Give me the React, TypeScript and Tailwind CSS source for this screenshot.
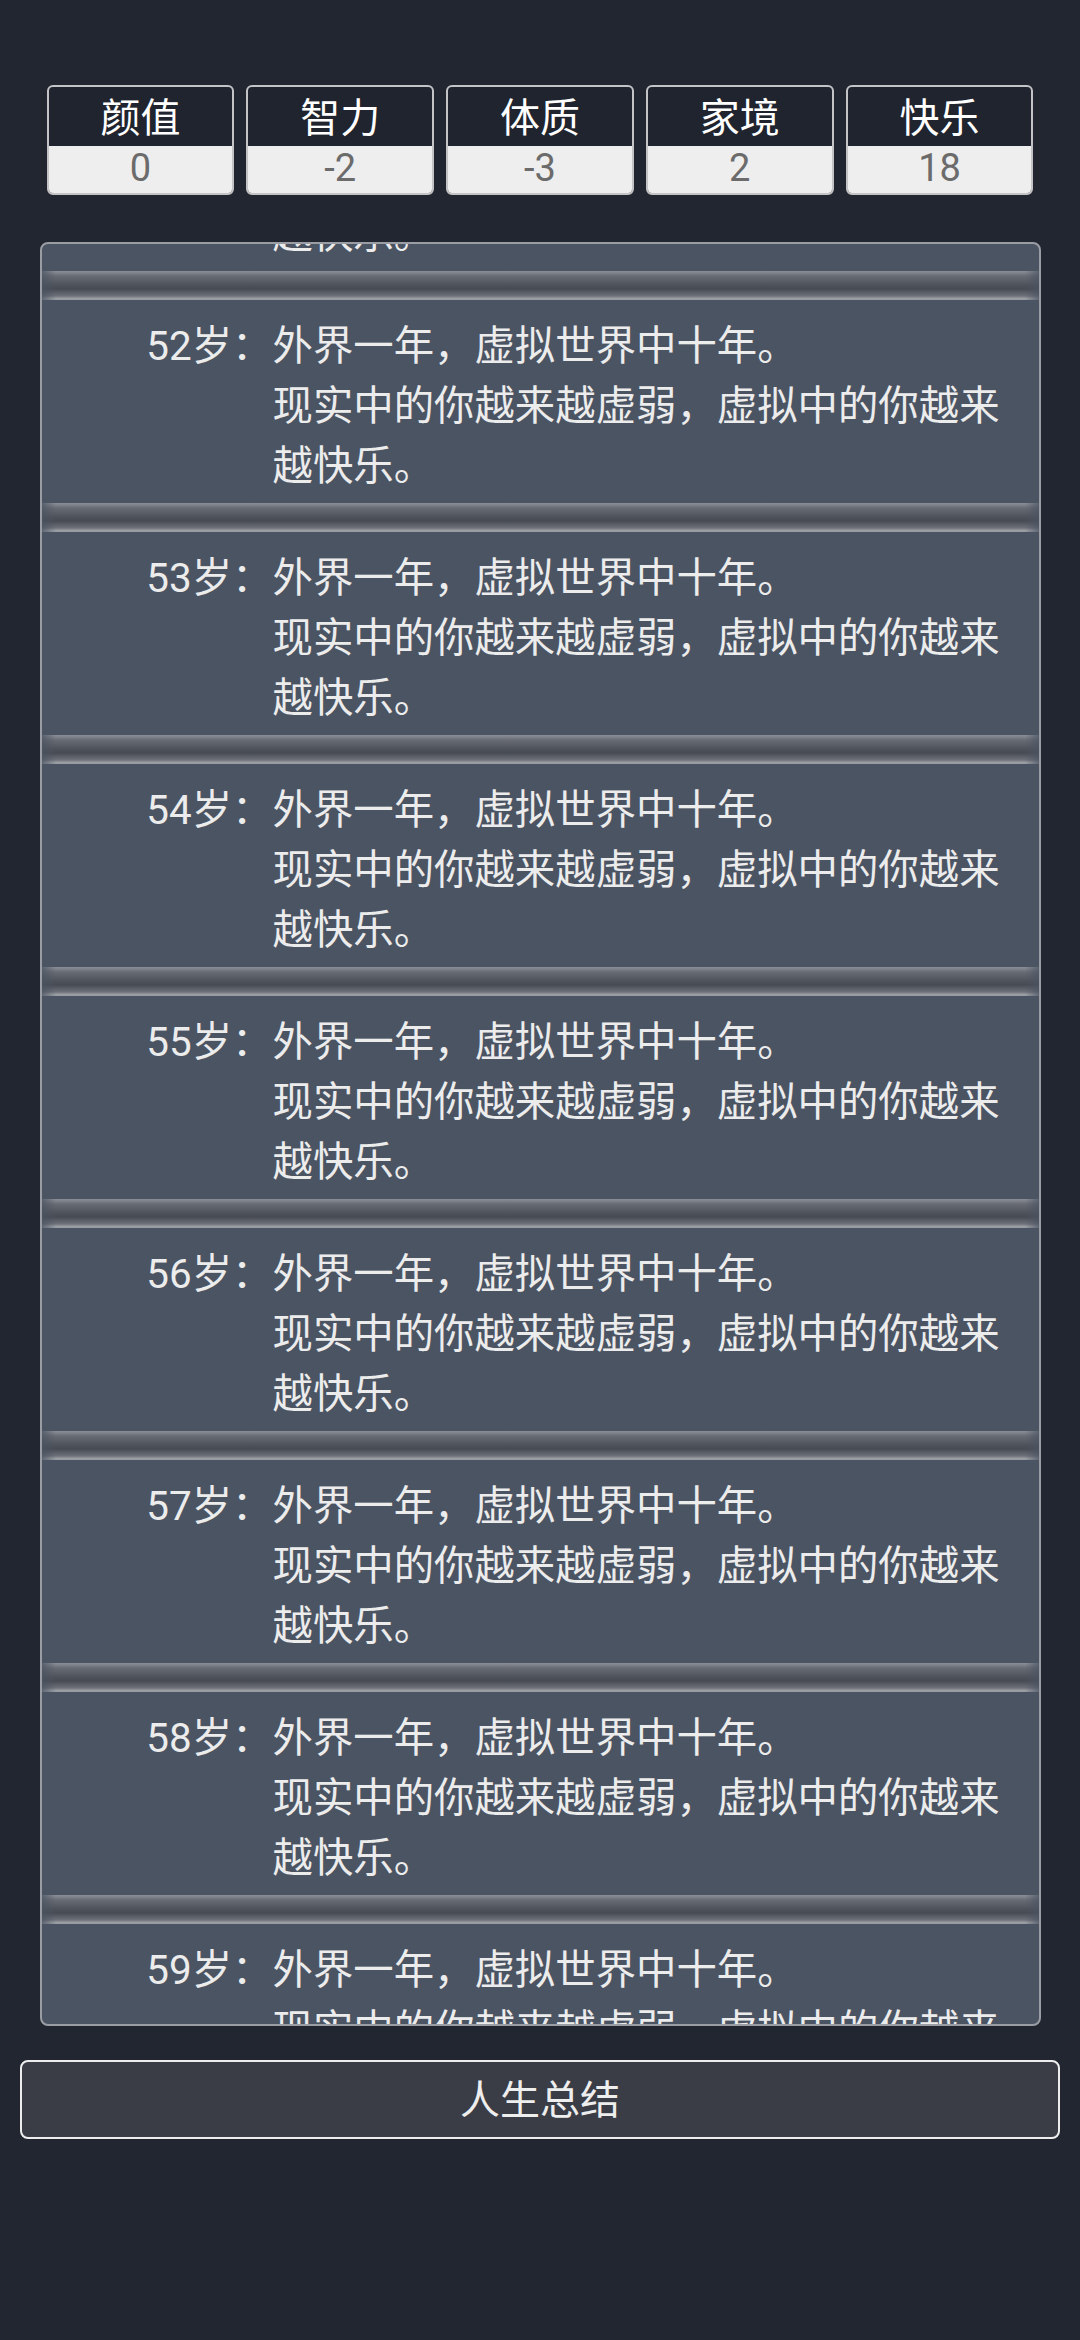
import React from "react";

type Stat = {
  label: string;
  value: number;
};

const stats: Stat[] = [
  { label: "颜值", value: 0 },
  { label: "智力", value: -2 },
  { label: "体质", value: -3 },
  { label: "家境", value: 2 },
  { label: "快乐", value: 18 },
];

const lines = ["外界一年，虚拟世界中十年。", "现实中的你越来越虚弱，虚拟中的你越来越快乐。"];

const ages = [52, 53, 54, 55, 56, 57, 58, 59];

function Ridge(): React.ReactElement {
  return (
    <div className="h-[29px] w-full bg-[linear-gradient(to_right,rgba(75,84,99,0.75),rgba(75,84,99,0)_14px,rgba(75,84,99,0)_calc(100%-14px),rgba(75,84,99,0.75)),linear-gradient(to_bottom,#8c8f96_0%,#676b73_18%,#4d5159_50%,#474b54_62%,#6e7179_86%,#a2a4aa_96%,#8f929a_100%)]" />
  );
}

function EventRow({ age }: { age: number }): React.ReactElement {
  return (
    <div className="flex pb-[6px] pt-[17px] text-[40.4px] leading-[60px] text-[#ececec]">
      <span className="w-[231px] shrink-0 text-right">{age}岁：</span>
      <div className="w-[740px]">
        {lines.map((line) => (
          <p key={line}>{line}</p>
        ))}
      </div>
    </div>
  );
}

export default function App(): React.ReactElement {
  return (
    <div className="flex min-h-[2340px] w-full flex-col bg-[#212630] pt-[85px] font-['Roboto','Noto_Sans_CJK_SC',sans-serif]">
      <div className="mx-auto flex h-[110px] w-[987px] gap-[12px]">
        {stats.map((stat) => (
          <div
            className="flex flex-1 flex-col rounded-[6px] border-2 border-[#c4c4c6] bg-[#1f242e]"
            key={stat.label}
          >
            <div className="flex h-[59px] items-end justify-center rounded-t-[4px] text-[40px] leading-[54px] text-white">
              {stat.label}
            </div>
            <div className="flex flex-1 items-start justify-center rounded-b-[4px] bg-[#eeeeee] text-[38px] leading-[44px] text-[#6b6b6b]">
              {stat.value}
            </div>
          </div>
        ))}
      </div>

      <div className="mx-auto mt-[47px] h-[1784px] w-[1001px] overflow-hidden rounded-[8px] border-2 border-[#9a9da3] bg-[#4b5463]">
        <div className="-mt-[176px]">
          <EventRow age={51} />
          {ages.map((age) => (
            <div key={age}>
              <Ridge />
              <EventRow age={age} />
            </div>
          ))}
        </div>
      </div>

      <button
        className="mx-auto mt-[34px] h-[79px] w-[1040px] rounded-[8px] border-2 border-[#eeeeee] bg-[#3a3d46] pt-[3px] text-[40px] text-[#eeeeee]"
        type="button"
      >
        人生总结
      </button>
    </div>
  );
}
